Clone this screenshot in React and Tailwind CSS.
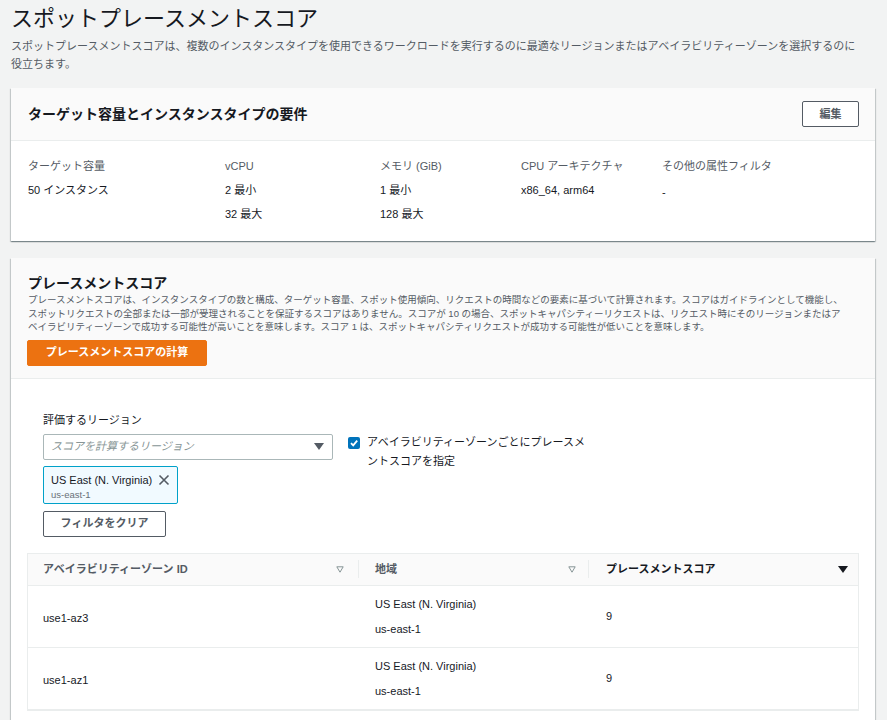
import React from "react";

const cardShadow =
  "shadow-[0_1px_1px_0_rgba(0,28,36,0.3),1px_1px_1px_0_rgba(0,28,36,0.15),-1px_1px_1px_0_rgba(0,28,36,0.15)]";

function SortHollow() {
  return (
    <svg width="8" height="7" viewBox="0 0 8 7" className="shrink-0">
      <polygon points="0.8,0.8 7.2,0.8 4,6.2" fill="none" stroke="#879596" strokeWidth="1" />
    </svg>
  );
}

function SortFilled() {
  return (
    <svg width="10" height="7" viewBox="0 0 10 7" className="shrink-0">
      <polygon points="0,0 10,0 5,7" fill="#16191f" />
    </svg>
  );
}

function Caret() {
  return (
    <svg width="10" height="7" viewBox="0 0 10 7" className="shrink-0">
      <polygon points="0,0 10,0 5,7" fill="#545b64" />
    </svg>
  );
}

function Row({ az, score }) {
  return (
    <div className="flex h-[62px] border-b border-[#eaeded] text-[11px] text-[#16191f]">
      <div className="w-[331px] flex items-center pl-[15px]">
        <span className="leading-[16px] mt-[3px]">{az}</span>
      </div>
      <div className="w-[230px] flex flex-col justify-center pl-[16px] leading-[25px] pt-[2px]">
        <div>US East (N. Virginia)</div>
        <div>us-east-1</div>
      </div>
      <div className="flex-1 flex items-center pl-[17px]">
        <span className="leading-[16px]">{score}</span>
      </div>
    </div>
  );
}

export default function App() {
  return (
    <div className="min-h-screen bg-[#f2f3f3] pl-[11px] pr-[12px] pt-[5px] text-[#16191f] font-['Liberation_Sans','Noto_Sans_CJK_JP',sans-serif]">
      <h1 className="text-[22px] leading-[28px] font-normal text-[#16191f]">
        スポットプレースメントスコア
      </h1>
      <p className="mt-[4px] text-[11px] leading-[18px] text-[#545b64]">
        スポットプレースメントスコアは、複数のインスタンスタイプを使用できるワークロードを実行するのに最適なリージョンまたはアベイラビリティーゾーンを選択するのに
        <br />
        役立ちます。
      </p>

      {/* Card 1 */}
      <div className={`mt-[15px] bg-white ${cardShadow}`}>
        <div className="h-[53px] flex items-center justify-between pl-[17px] pr-[16px] bg-[#fafafa] border-b border-[#eaeded]">
          <h2 className="text-[14px] leading-[18px] font-bold">ターゲット容量とインスタンスタイプの要件</h2>
          <button className="w-[57px] h-[26px] border border-[#545b64] rounded-[2px] bg-white text-[11px] font-bold text-[#545b64] leading-none">
            編集
          </button>
        </div>
        <div className="flex pt-[16px] pb-[15px] pl-[17px] text-[11px]">
          <div className="w-[197px]">
            <div className="leading-[18px] text-[#545b64]">ターゲット容量</div>
            <div className="mt-[3px] leading-[24px]">50 インスタンス</div>
          </div>
          <div className="w-[155px]">
            <div className="leading-[18px] text-[#545b64]">vCPU</div>
            <div className="mt-[3px] leading-[24px]">2 最小</div>
            <div className="leading-[24px]">32 最大</div>
          </div>
          <div className="w-[141px]">
            <div className="leading-[18px] text-[#545b64]">メモリ (GiB)</div>
            <div className="mt-[3px] leading-[24px]">1 最小</div>
            <div className="leading-[24px]">128 最大</div>
          </div>
          <div className="w-[141px]">
            <div className="leading-[18px] text-[#545b64]">CPU アーキテクチャ</div>
            <div className="mt-[3px] leading-[24px]">x86_64, arm64</div>
          </div>
          <div className="flex-1">
            <div className="leading-[18px] text-[#545b64]">その他の属性フィルタ</div>
            <div className="mt-[3px] leading-[24px] pt-[2px]">-</div>
          </div>
        </div>
      </div>

      {/* Card 2 */}
      <div className={`mt-[17px] bg-white ${cardShadow}`}>
        <div className="bg-[#fafafa] border-b border-[#eaeded] pt-[16px] pb-[12px] px-[16px]">
          <h2 className="pl-[1px] text-[14px] leading-[18px] font-bold">プレースメントスコア</h2>
          <p className="pl-[1px] mt-[1px] text-[9.5px] leading-[13.5px] text-[#545b64]">
            プレースメントスコアは、インスタンスタイプの数と構成、ターゲット容量、スポット使用傾向、リクエストの時間などの要素に基づいて計算されます。スコアはガイドラインとして機能し、
            <br />
            スポットリクエストの全部または一部が受理されることを保証するスコアはありません。スコアが 10 の場合、スポットキャパシティーリクエストは、リクエスト時にそのリージョンまたはア
            <br />
            ベイラビリティーゾーンで成功する可能性が高いことを意味します。スコア 1 は、スポットキャパシティリクエストが成功する可能性が低いことを意味します。
          </p>
          <button className="mt-[6px] w-[180px] h-[26px] rounded-[2px] bg-[#ec7211] border border-[#ec7211] text-white text-[11px] font-bold leading-none">
            プレースメントスコアの計算
          </button>
        </div>

        <div className="pt-[32px] px-[16px] pb-[20px]">
          <div className="flex pl-[16px]">
            <div className="w-[290px]">
              <div className="text-[11px] leading-[18px]">評価するリージョン</div>
              <div className="mt-[5px] h-[26px] border border-[#aab7b8] rounded-[2px] bg-white flex items-center justify-between pl-[7px] pr-[8px]">
                <span className="italic text-[11px] text-[#879596] leading-none">スコアを計算するリージョン</span>
                <Caret />
              </div>
              <div className="mt-[6px] w-[135px] h-[38px] border border-[#00a1c9] rounded-[2px] bg-[#f1faff] pl-[7px] pt-[5px]">
                <div className="flex items-center">
                  <span className="text-[11px] leading-[16px]">US East (N. Virginia)</span>
                  <svg width="12" height="12" viewBox="0 0 12 12" className="ml-[6px]">
                    <path d="M1.5 1.5 L10.5 10.5 M10.5 1.5 L1.5 10.5" stroke="#545b64" strokeWidth="1.6" fill="none" />
                  </svg>
                </div>
                <div className="text-[9.5px] leading-[14px] text-[#687078]">us-east-1</div>
              </div>
              <button className="mt-[7px] w-[123px] h-[26px] border border-[#545b64] rounded-[2px] bg-white text-[11px] font-bold text-[#545b64] leading-none">
                フィルタをクリア
              </button>
            </div>
            <div className="ml-[15px] pt-[23px] flex items-start">
              <div className="mt-[3px] w-[12px] h-[12px] rounded-[2px] bg-[#0073bb] flex items-center justify-center">
                <svg width="10" height="10" viewBox="0 0 10 10">
                  <path d="M2 5.2 L4.2 7.4 L8.2 2.6" stroke="white" strokeWidth="1.8" fill="none" />
                </svg>
              </div>
              <div className="ml-[7px] text-[11px] leading-[19px] -mt-[1px]">
                アベイラビリティーゾーンごとにプレースメ
                <br />
                ントスコアを指定
              </div>
            </div>
          </div>

          <div className="mt-[16px] border border-[#eaeded] bg-white">
            <div className="flex h-[32px] bg-[#fafafa] border-b border-[#eaeded] text-[11px] font-bold text-[#545b64]">
              <div className="w-[331px] flex items-center pl-[15px]">
                <span className="flex-1 leading-[16px]">アベイラビリティーゾーン ID</span>
                <SortHollow />
                <span className="ml-[14px] w-px h-[18px] bg-[#eaeded]" />
              </div>
              <div className="w-[230px] flex items-center pl-[16px]">
                <span className="flex-1 leading-[16px]">地域</span>
                <SortHollow />
                <span className="ml-[12px] w-px h-[18px] bg-[#eaeded]" />
              </div>
              <div className="flex-1 flex items-center pl-[17px] pr-[10px]">
                <span className="flex-1 leading-[16px] text-[#16191f]">プレースメントスコア</span>
                <SortFilled />
              </div>
            </div>
            <Row az="use1-az3" score="9" />
            <Row az="use1-az1" score="9" />
          </div>
        </div>
      </div>
    </div>
  );
}
